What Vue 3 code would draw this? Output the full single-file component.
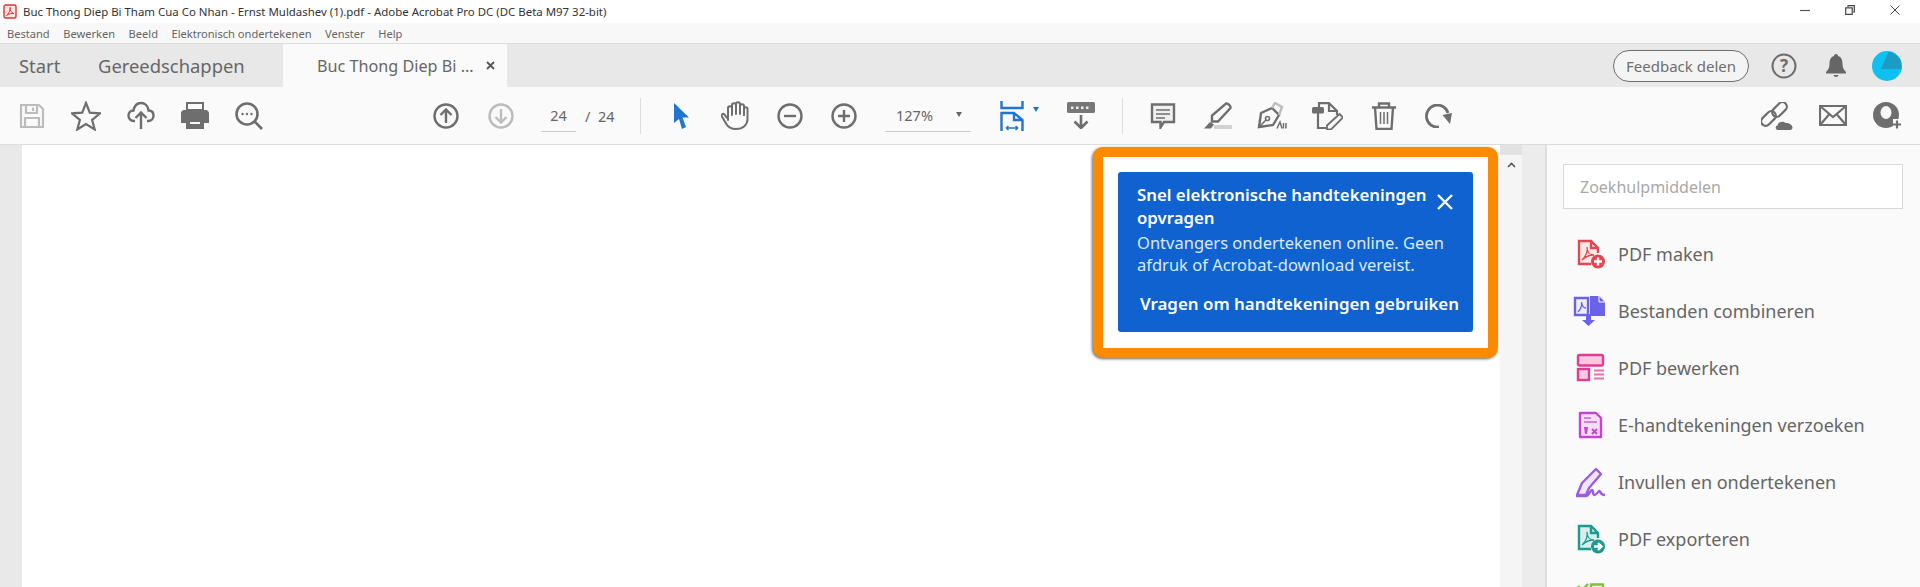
<template>
  <div class="app">
    <div class="titlebar">
      <svg class="pdf-ico" width="14" height="15" viewBox="0 0 14 15"><rect x="1" y="1" width="12" height="13" rx="1.5" fill="#fbe3e3" stroke="#d9363a" stroke-width="1.4"/><path d="M3.5 11.5C6 9.5 7.5 6 7 3.5 6.8 6 8.5 9 11 9.5 8.5 9.2 5.5 9.8 3.5 11.5Z" fill="none" stroke="#d9363a"/></svg>
      <span class="title">Buc Thong Diep Bi Tham Cua Co Nhan - Ernst Muldashev (1).pdf - Adobe Acrobat Pro DC (DC Beta M97 32-bit)</span>
      <div class="winbtns">
        <svg width="10" height="10" viewBox="0 0 10 10"><path d="M0 5.5H10" stroke="#555" stroke-width="1.2"/></svg>
        <svg width="10" height="10" viewBox="0 0 10 10"><path d="M3 2V.7H9.3V7H8M.7 2.8H7.2V9.3H.7Z" fill="none" stroke="#444" stroke-width="1.2"/></svg>
        <svg width="10" height="10" viewBox="0 0 10 10"><path d="M.5.5L9.5 9.5M9.5.5L.5 9.5" stroke="#444" stroke-width="1"/></svg>
      </div>
    </div>
    <div class="menubar">
      <span v-for="m in menus" :key="m">{{ m }}</span>
    </div>
    <div class="tabbar">
      <span class="tab-start">Start</span>
      <span class="tab-tools">Gereedschappen</span>
      <div class="tab-doc">
        <span>Buc Thong Diep Bi ...</span>
        <svg width="9" height="9" viewBox="0 0 9 9"><path d="M1 1L8 8M8 1L1 8" stroke="#555" stroke-width="1.8"/></svg>
      </div>
      <div class="tab-right">
        <button class="feedback">Feedback delen</button>
        <svg class="help" width="26" height="26" viewBox="0 0 26 26"><circle cx="13" cy="13" r="11.5" fill="none" stroke="#6e6e6e" stroke-width="2"/><text x="13" y="19" text-anchor="middle" class="help-q">?</text></svg>
        <svg class="bell" width="22" height="25" viewBox="0 0 22 25"><path d="M11 1C12.5 1 13 2 13 3 16.5 4 17.5 7 17.5 11 17.5 15 19 17 21 19V20.5H1V19C3 17 4.5 15 4.5 11 4.5 7 5.5 4 9 3 9 2 9.5 1 11 1Z" fill="#666"/><path d="M8.5 22H13.5C13 24.5 9 24.5 8.5 22Z" fill="#666"/></svg>
        <svg class="avatar" width="30" height="30" viewBox="0 0 30 30"><circle cx="15" cy="15" r="15" fill="#0cc0ef"/><path d="M9 18L16.5 1C22 1.5 26 5 28.5 9L29.5 18Z" fill="#1c9bc4"/></svg>
      </div>
    </div>
    <div class="toolbar">
      <div class="tool-group left-group">
        <svg width="26" height="26" viewBox="0 0 26 26" fill="none" stroke="#bcbcbc" stroke-width="2.2"><path d="M2 2H20L24 6V24H2Z"/><path d="M7 2V10H18V2M14 4.5V8M6 24V15H20V24"/></svg>
        <svg width="30" height="30" viewBox="0 0 30 30" fill="none" stroke="#6e6e6e" stroke-width="2.2"><path d="M15 2L18.8 11.6 29 12.3 21.1 18.8 23.7 28.5 15 23.1 6.3 28.5 8.9 18.8 1 12.3 11.2 11.6Z"/></svg>
        <svg width="28" height="29" viewBox="0 0 28 29" fill="none" stroke="#6e6e6e" stroke-width="2.4"><path d="M8 20H7C3.5 20 1.5 17.5 1.5 14.5 1.5 11.5 3.5 9.5 6.5 9.5 7.5 4.5 10.5 2 14 2 18 2 21 5 21.5 9.5 24.5 9.5 26.5 11.5 26.5 14.5 26.5 17.5 24.5 20 21 20H20"/><path d="M14 28V12M8.5 17L14 11.5 19.5 17"/></svg>
        <svg width="28" height="28" viewBox="0 0 28 28"><path d="M6 1H22V8H6Z" fill="none" stroke="#6e6e6e" stroke-width="2"/><path d="M3 8H25C26.5 8 28 9.5 28 11V21H23V17H5V21H0V11C0 9.5 1.5 8 3 8Z" fill="#6e6e6e"/><path d="M5 16H23V27H5ZM9 20V22H19V20Z" fill="#6e6e6e" fill-rule="evenodd"/></svg>
        <svg width="28" height="28" viewBox="0 0 28 28" fill="none" stroke="#6e6e6e" stroke-width="2.6"><circle cx="12" cy="12" r="10.5"/><path d="M19.5 19.5L27 27"/><circle cx="7.5" cy="12" r="1.2" fill="#6e6e6e" stroke="none"/><circle cx="12" cy="12" r="1.2" fill="#6e6e6e" stroke="none"/><circle cx="16.5" cy="12" r="1.2" fill="#6e6e6e" stroke="none"/></svg>
      </div>
      <div class="tool-group pager">
        <svg width="26" height="26" viewBox="0 0 26 26" fill="none" stroke="#6e6e6e" stroke-width="2.4"><circle cx="13" cy="13" r="11.5"/><path d="M13 20V6.5M7.5 12L13 6.5 18.5 12"/></svg>
        <svg width="26" height="26" viewBox="0 0 26 26" fill="none" stroke="#bcbcbc" stroke-width="2.4"><circle cx="13" cy="13" r="11.5"/><path d="M13 6V19.5M7.5 14L13 19.5 18.5 14"/></svg>
        <span class="page-now">24</span>
        <span class="page-of">/&nbsp;&nbsp;24</span>
      </div>
      <div class="sep"></div>
      <div class="tool-group view">
        <svg width="16" height="26" viewBox="0 0 16 26"><path d="M1 0L16 14.5H9.5L13 24 9 26 6 16 1 20Z" fill="#2275cc"/></svg>
        <svg class="hand" width="28" height="29" viewBox="0 0 28 29" fill="none" stroke="#6e6e6e" stroke-width="2" stroke-linecap="round"><path d="M6 17L3.5 13.5C2 12 0 13.5 1 15.5L5 22.5C7 26 10 28 15 28 22 28 26.5 24 26.5 18V8C26.5 5.5 23 5.5 23 8V14"/><path d="M23 14V5C23 2.5 19 2.5 19 5V13M19 13V3C19 .8 15 .8 15 3V13M15 13V4C15 1.8 11 1.8 11 4V14M11 14V7C11 4.8 7 4.8 7 7V19"/></svg>
        <svg width="26" height="26" viewBox="0 0 26 26" fill="none" stroke="#6e6e6e" stroke-width="2.4"><circle cx="13" cy="13" r="11.5"/><path d="M7 13H19"/></svg>
        <svg width="26" height="26" viewBox="0 0 26 26" fill="none" stroke="#6e6e6e" stroke-width="2.4"><circle cx="13" cy="13" r="11.5"/><path d="M7 13H19M13 7V19"/></svg>
        <div class="zoom-select"><span>127%</span><i class="caret"></i></div>
        <div class="fit">
          <svg width="24" height="30" viewBox="0 0 24 30" fill="none" stroke="#2275cc" stroke-width="2.4"><path d="M1.5 0V7H22.5V0"/><path d="M1.5 30V12H14L22.5 19V30M14 12V19H22.5"/><path d="M6 27H18M6 27L8.5 25M6 27L8.5 29M18 27L15.5 25M18 27L15.5 29" stroke-width="1.4"/></svg>
          <i class="caret blue"></i>
        </div>
        <svg width="28" height="27" viewBox="0 0 28 27"><rect x="0" y="0" width="28" height="11" rx="1.5" fill="#777"/><path d="M4 4.5H6.500V7H4ZM9 4.5H11.500V7H9ZM14 4.5H16.500V7H14ZM19 4.5H21.500V7H19Z" fill="#eee"/><path d="M14 13V26M7.5 19.5L14 26 20.5 19.5" fill="none" stroke="#6e6e6e" stroke-width="2.6"/></svg>
      </div>
      <div class="sep"></div>
      <div class="tool-group edit">
        <svg width="26" height="26" viewBox="0 0 26 26" fill="none" stroke="#6e6e6e" stroke-width="2.4"><path d="M2 1.5H24V19H14L10.5 24.5V19H2Z" fill="#f0f0f0"/><path d="M6 7H20M6 11H20M6 15H15" stroke-width="1.5"/></svg>
        <svg width="29" height="27" viewBox="0 0 29 27" fill="none" stroke="#6e6e6e" stroke-width="2.4"><path d="M23 1.5C25 1 28 4 27.5 6L15 19.5H9V13.5Z"/><path d="M7 20L1 26.5H8L11 22.5Z" fill="#6e6e6e" stroke="none"/><rect x="11" y="23" width="18" height="4" fill="#d2d2d2" stroke="none"/></svg>
        <svg class="pen" width="30" height="27" viewBox="0 0 30 27" fill="none" stroke="#6e6e6e" stroke-width="2.4"><path d="M2 25L4 11 15 6 22 13 16 23Z"/><path d="M15 6L18 1 25 5 22 13" stroke="#bdbdbd"/><path d="M2 25L9 18" stroke-width="1.6"/><circle cx="10.5" cy="16.5" r="2" stroke-width="1.6"/><path d="M20 26.500L23 20 25 26.500M26.500 26.500V21M29 26.500V21" stroke-width="1.5"/></svg>
        <svg class="edit-doc" width="31" height="28" viewBox="0 0 31 28" fill="none" stroke="#6e6e6e" stroke-width="2.2"><rect x="0" y="5" width="12" height="6.5" rx="1.5" fill="#6e6e6e" stroke="none"/><path d="M7 5V1.2H17L25 9V13M17 1.2V9H25M6 11V26H14"/><path d="M27.5 12L31 15.5 19 27.5H15V23.5Z" stroke-width="1.8"/></svg>
        <svg class="trash" width="26" height="28" viewBox="0 0 26 28" fill="none" stroke="#6e6e6e" stroke-width="2.4"><path d="M1 5.5H25M8 5.5V1.5H18V5.5M4 5.5L5.5 27H20.5L22 5.5"/><path d="M9.5 10V22M13 10V22M16.5 10V22" stroke-width="1.5"/></svg>
        <svg width="28" height="24" viewBox="0 0 28 24" fill="none"><path d="M15 23A11 11 0 1 1 24 9" stroke="#6e6e6e" stroke-width="2.8"/><path d="M18.5 11L28 9 26 20Z" fill="#6e6e6e"/></svg>
      </div>
      <div class="tool-group share">
        <svg width="32" height="28" viewBox="0 0 32 28" fill="none" stroke="#6e6e6e" stroke-width="2.2"><rect x="-1" y="12" width="17" height="9" rx="4.5" transform="rotate(-45 7.5 16.5)"/><rect x="10" y="3" width="17" height="9" rx="4.5" transform="rotate(-45 18.5 7.5)"/><path d="M17 28C14 28 14 24 16.5 23.5 17 20 22 18.5 24.5 21 28 20.5 31.5 23 31.5 25.5 31.5 27.5 30 28 28 28Z" fill="#6e6e6e" stroke="none"/></svg>
        <svg width="28" height="21" viewBox="0 0 28 21" fill="none" stroke="#6e6e6e" stroke-width="2.2"><path d="M1 1H27V20H1Z"/><path d="M1 1L14 12 27 1M1 20L10.5 9M27 20L17.5 9"/></svg>
        <svg width="29" height="27" viewBox="0 0 29 27"><circle cx="13" cy="13" r="13" fill="#6e6e6e"/><ellipse cx="13" cy="10.5" rx="5.5" ry="6.5" fill="#fafafa"/><path d="M20 17H29V27H20Z" fill="#fafafa"/><path d="M24 18.5V26.5M20 22.5H28" stroke="#6e6e6e" stroke-width="2.2"/></svg>
      </div>
    </div>
    <div class="main">
      <div class="gutter"></div>
      <div class="page"></div>
      <div class="scrollbar">
        <div class="scroll-thumb"></div>
        <svg width="9" height="6" viewBox="0 0 9 6"><path d="M1 5L4.5 1.5 8 5" fill="none" stroke="#555" stroke-width="1.6"/></svg>
      </div>
      <div class="sash"></div>
      <div class="panel">
        <div class="search">Zoekhulpmiddelen</div>
        <div class="tool-list">
          <div class="tool-item" v-for="t in tools" :key="t.key">
            <svg width="34" height="34" viewBox="0 0 34 34" fill="none" v-html="t.icon"></svg>
            <span v-if="t.label">{{ t.label }}</span>
          </div>
        </div>
      </div>
      <div class="callout">
        <div class="callout-card">
          <div class="callout-head">
            <div class="callout-title">Snel elektronische handtekeningen opvragen</div>
            <svg width="16" height="16" viewBox="0 0 16 16"><path d="M1 1L15 15M15 1L1 15" stroke="#fff" stroke-width="2.4"/></svg>
          </div>
          <div class="callout-text">Ontvangers ondertekenen online. Geen afdruk of Acrobat-download vereist.</div>
          <div class="callout-link">Vragen om handtekeningen gebruiken</div>
        </div>
      </div>
    </div>
  </div>
</template>

<script setup>
const menus = ['Bestand', 'Bewerken', 'Beeld', 'Elektronisch ondertekenen', 'Venster', 'Help']

// pdf page with a badge, shared by "maken" and "exporteren"
const pdfPage = (color, tint, badge) =>
  `<path d="M7 4H19L26 11V26H7Z" fill="${tint}"/>
   <path d="M19 27H7V4H19L26 11V16M19 4V11H26" stroke="${color}" stroke-width="2.4"/>
   <path d="M10 23C14 19 16 15 15 10 15 15 18 18 22 18 18 18 14 19 10 23Z" stroke="${color}" stroke-width="1.3"/>
   <circle cx="26" cy="24.5" r="7" fill="${color}"/>${badge}`

const tools = [
  {
    key: 'maken',
    label: 'PDF maken',
    icon: pdfPage('#e2474f', '#fbe9e9', '<path d="M26 20.5V28.5M22 24.5H30" stroke="#fff" stroke-width="2.4"/>')
  },
  {
    key: 'combineren',
    label: 'Bestanden combineren',
    icon: '<path d="M3 4H16V21H3Z" fill="#eeeefc" stroke="#6a63e8" stroke-width="2.4"/><path d="M6 18C9 15 10 12 9.5 8 10 12 12 14 14 14" stroke="#6a63e8" stroke-width="1.3"/><path d="M18 2H27L33 8V22H18Z" fill="#6a63e8"/><path d="M27 2V8H33" stroke="#fff" stroke-width="1"/><path d="M14 20H19V26H23L16.5 32 10 26H14Z" fill="#6a63e8"/>'
  },
  {
    key: 'bewerken',
    label: 'PDF bewerken',
    icon: '<rect x="6" y="4" width="25" height="10.5" rx="1.5" fill="#f7c9e1" stroke="#df3d94" stroke-width="2.4"/><rect x="6" y="18" width="11" height="11" fill="#f7c9e1" stroke="#df3d94" stroke-width="2.4"/><path d="M22 19.5H32M22 23.5H32M22 27.5H32" stroke="#e56fae" stroke-width="1.8"/>'
  },
  {
    key: 'verzoeken',
    label: 'E-handtekeningen verzoeken',
    icon: '<path d="M8 5H24L29 10V29H8Z" fill="#f5dff5" stroke="#c545d1" stroke-width="2.4" stroke-linejoin="round"/><path d="M12 10H19M12 14H25" stroke="#d27fdc" stroke-width="2"/><path d="M12 19H16L15 26H13Z" fill="#c545d1"/><path d="M20 21L25 26M25 21L20 26" stroke="#c545d1" stroke-width="2"/>'
  },
  {
    key: 'ondertekenen',
    label: 'Invullen en ondertekenen',
    icon: '<path d="M5 30L10 18 24 4 29 9 17 23 14 30Z" fill="#f1e6fb" stroke="#9a5ce0" stroke-width="2.4" stroke-linejoin="round"/><path d="M4 31H14C17 31 18 25 20 25 21.5 25 20.5 30 22.5 30 25 30 26 26 27.5 26 28.5 26 28 30 33 30" stroke="#9a5ce0" stroke-width="2.4"/>'
  },
  {
    key: 'exporteren',
    label: 'PDF exporteren',
    icon: pdfPage('#1d9a8f', '#d9eeec', '<path d="M22 24.5H29M26 21L29.5 24.5 26 28" stroke="#fff" stroke-width="2.4"/>')
  },
  {
    // label of this row falls below the visible area
    key: 'laatste',
    label: '',
    icon: '<path d="M6 7L10 11 16 5M19 5.5H31V14H19Z" stroke="#7cc142" stroke-width="2.4"/>'
  }
]
</script>

<style>
html, body {
  margin: 0;
  overflow: hidden;
}
</style>

<style scoped>
.app {
  width: 1920px;
  height: 587px;
  display: flex;
  flex-direction: column;
  overflow: hidden;
  font-family: "Noto Sans", "Liberation Sans", sans-serif;
  background: #fff;
  color: #555;
}

.titlebar {
  height: 23px;
  display: flex;
  align-items: center;
  padding-left: 3px;
  background: #fff;
  flex-shrink: 0;
}
.pdf-ico {
  margin-right: 6px;
}
.title {
  font-size: 11.45px;
  color: #333;
}
.winbtns {
  margin-left: auto;
  display: flex;
  gap: 35px;
  padding-right: 20px;
  margin-top: -3px;
}

.menubar {
  height: 20px;
  flex-shrink: 0;
  background: #f8f8f8;
  display: flex;
  align-items: center;
  gap: 13.5px;
  padding-left: 7px;
  font-size: 11.1px;
  color: #666;
}

.tabbar {
  height: 44px;
  flex-shrink: 0;
  background: #e8e8e8;
  border-top: 1px solid #ddd;
  box-sizing: border-box;
  display: flex;
  align-items: stretch;
  font-size: 18.4px;
  color: #666;
}
.tab-start {
  margin-left: 19px;
  width: 79px;
  align-self: center;
}
.tab-tools {
  width: 185px;
  align-self: center;
}
.tab-doc {
  width: 224px;
  background: #fafafa;
  display: flex;
  align-items: center;
  gap: 12px;
  padding-left: 34px;
  box-sizing: border-box;
  font-size: 16.2px;
  white-space: nowrap;
}
.tab-right {
  margin-left: auto;
  display: flex;
  align-items: center;
  padding-right: 18px;
}
.feedback {
  width: 136px;
  height: 32px;
  border: 1.5px solid #6e6e6e;
  border-radius: 16px;
  background: #f4f4f4;
  font-family: inherit;
  font-size: 15px;
  color: #6e6e6e;
  padding: 0;
  margin-right: 22px;
}
.help-q {
  font-size: 17px;
  font-weight: 700;
  fill: #6e6e6e;
}
.bell {
  margin-left: 28px;
}
.avatar {
  margin-left: 25px;
}

.toolbar {
  height: 58px;
  flex-shrink: 0;
  background: #fafafa;
  border-bottom: 1px solid #dcdcdc;
  box-sizing: border-box;
  display: flex;
  align-items: center;
  position: relative;
}
.tool-group {
  display: flex;
  align-items: center;
}
.left-group {
  margin-left: 19px;
  gap: 26px;
  width: 414px;
}
.pager {
  gap: 29px;
  width: 207px;
  font-size: 14.5px;
  color: #666;
}
.page-now {
  width: 35px;
  text-align: center;
  padding: 5px 0 6px;
  border-bottom: 1px solid #ccc;
  margin-left: -2px;
  margin-right: -20px;
}
.sep {
  width: 1px;
  height: 36px;
  background: #ddd;
}
.view {
  margin-left: 32px;
  gap: 28px;
  width: 449px;
}
.hand {
  margin-left: 4px;
}
.zoom-select {
  width: 86px;
  display: flex;
  align-items: center;
  justify-content: space-between;
  box-sizing: border-box;
  padding: 5px 9px 6px 11px;
  border-bottom: 1px solid #ccc;
  font-size: 14.5px;
  color: #666;
}
.caret {
  width: 0;
  height: 0;
  border-left: 3.5px solid transparent;
  border-right: 3.5px solid transparent;
  border-top: 5px solid #666;
}
.caret.blue {
  border-top-color: #2275cc;
  margin-bottom: 12px;
}
.fit {
  display: flex;
  align-items: center;
  gap: 9px;
  margin-left: 1px;
}
.edit {
  margin-left: 27px;
  gap: 27px;
}
.pen {
  margin-left: -2px;
}
.edit-doc {
  margin-left: -2px;
}
.trash {
  margin-left: 1px;
}
.share {
  margin-left: auto;
  padding-right: 18px;
  gap: 26px;
}

.main {
  flex: 1;
  min-height: 0;
  display: flex;
  position: relative;
  background: #e5e5e5;
}
.gutter {
  width: 22px;
  background: #e9e9e9;
}
.page {
  width: 1478px;
  background: #fff;
}
.scrollbar {
  width: 22px;
  background: #f5f5f5;
  display: flex;
  flex-direction: column;
  align-items: center;
  box-sizing: border-box;
}
.scroll-thumb {
  width: 100%;
  height: 10px;
  background: #e2e2e2;
  margin-bottom: 7px;
}
.sash {
  width: 23px;
  background: #ececec;
}
.panel {
  width: 375px;
  background: #fafafa;
  border-left: 2px solid #dedede;
  box-sizing: border-box;
  padding: 19px 17px 0 16px;
}
.search {
  height: 45px;
  box-sizing: border-box;
  border: 1px solid #d8d8d8;
  background: #fff;
  display: flex;
  align-items: center;
  padding-left: 16px;
  font-size: 16px;
  color: #a8a8a8;
}
.tool-list {
  margin-top: 16px;
  display: flex;
  flex-direction: column;
}
.tool-item {
  height: 57px;
  flex-shrink: 0;
  display: flex;
  align-items: center;
  gap: 12px;
  margin-left: 9px;
  font-size: 18px;
  color: #666;
}

.callout {
  position: absolute;
  left: 1093px;
  top: 2px;
  width: 405px;
  height: 211px;
  box-sizing: border-box;
  border: 10px solid #fb8a00;
  border-radius: 10px;
  background: #fff;
  box-shadow: -1px 1px 3px rgba(0, 0, 0, .6);
  padding: 15px;
}
.callout-card {
  height: 160px;
  background: #0f62cf;
  border-radius: 3px;
  box-sizing: border-box;
  padding: 11px 20px 0 19px;
  color: #fff;
}
.callout-head {
  display: flex;
  align-items: center;
  gap: 6px;
}
.callout-head svg {
  flex-shrink: 0;
  margin-bottom: 8px;
}
.callout-title {
  font-size: 16.8px;
  font-weight: 600;
  line-height: 23px;
}
.callout-text {
  margin-top: 3px;
  font-size: 16.5px;
  line-height: 22px;
  color: #dce9fa;
}
.callout-link {
  margin-top: 16px;
  margin-left: 3px;
  font-size: 16.9px;
  font-weight: 600;
  white-space: nowrap;
}
</style>
